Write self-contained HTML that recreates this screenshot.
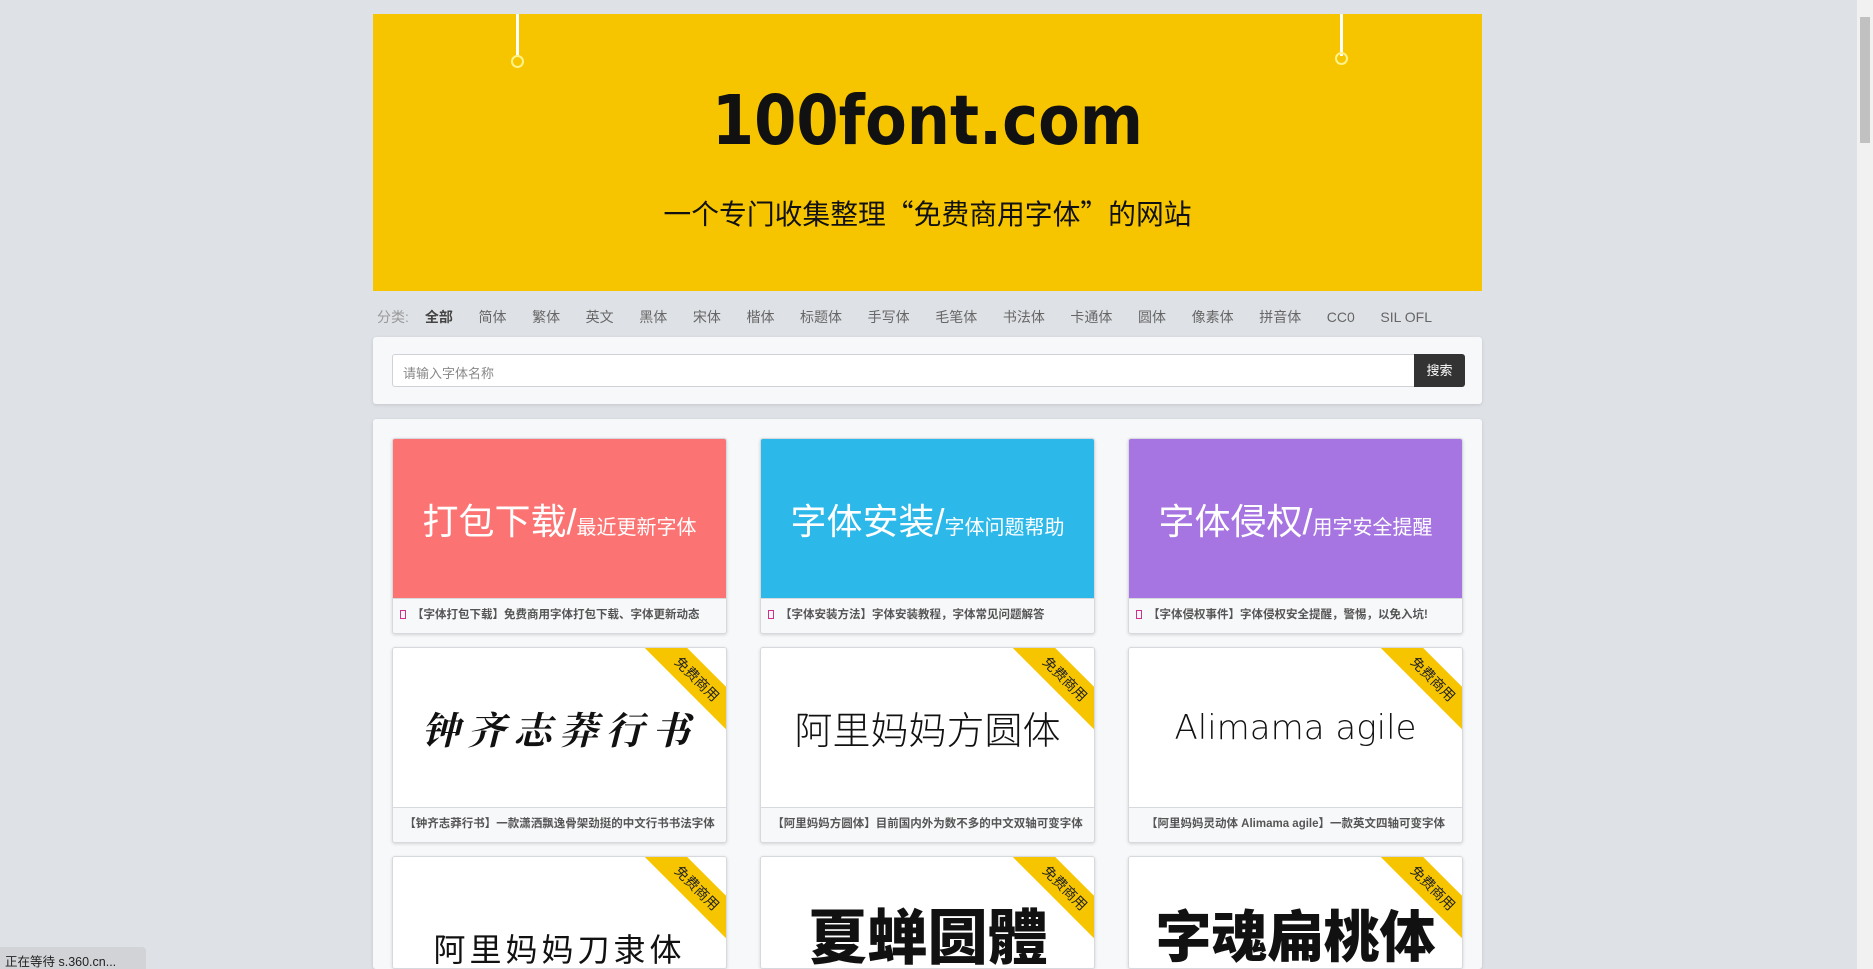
<!DOCTYPE html>
<html><head><meta charset="utf-8"><style>
*{margin:0;padding:0;box-sizing:border-box}
html,body{width:1873px;height:969px;overflow:hidden;background:#dee1e6;font-family:"Liberation Sans","Noto Sans CJK SC",sans-serif}
#wrap{position:relative;width:1873px;height:969px;overflow:hidden}
.banner{position:absolute;left:373px;top:14px;width:1109px;height:277px;background:#f6c500}
.line{position:absolute;top:0;width:3px;height:42px;background:#fff}
.ring{position:absolute;top:41px;width:13px;height:13px;border:2px solid #fff38a;border-radius:50%}
.title{position:absolute;left:0;right:0;top:67px;text-align:center;font-size:69px;line-height:80px;font-weight:bold;color:#111;font-family:"DejaVu Sans","Liberation Sans",sans-serif;transform:scaleX(0.88)}
.sub{position:absolute;left:0;right:0;top:179px;text-align:center;font-size:27.8px;line-height:40px;color:#111;font-family:"Noto Sans CJK SC",sans-serif}
.cats{position:absolute;left:377px;top:307px;font-size:14px;color:#666;white-space:nowrap}
.cats span{margin-right:25.6px}
.cats .lab{color:#999;margin-right:16px}
.cats b{color:#444;margin-right:25.6px}
.panel{position:absolute;left:373px;width:1109px;background:#f7f8fa;border-radius:3px;box-shadow:0 1px 3px rgba(0,0,0,.12)}
.inp{position:absolute;left:19px;top:17px;width:1024px;height:33px;background:#fff;border:1px solid #cfd3d8;border-radius:3px 0 0 3px;font-size:13px;color:#888;padding:8px 10px}
.btn{position:absolute;left:1041px;top:17px;width:51px;height:33px;background:#333;color:#fff;font-size:13px;text-align:center;line-height:33px;border-radius:0 3px 3px 0}
.card{position:absolute;width:335px;background:#f7f8fa;border:1px solid #d6d9de;border-radius:3px;box-shadow:0 1px 3px rgba(0,0,0,.15);overflow:hidden}
.img{height:160px;position:relative;overflow:hidden;background:#fff;border-bottom:1px solid #d6d9de;display:flex;align-items:center;justify-content:center}
.cap{height:34px;font-size:11.5px;font-weight:bold;color:#555;padding:0 5px;line-height:32px;white-space:nowrap;overflow:hidden}
.ic{display:inline-block;width:6px;height:9px;border:1px solid #d0308f;margin:0 6px 0 2px;vertical-align:-1px}
.big{color:#fff;font-size:36px;font-family:"Liberation Sans","Noto Sans CJK SC",sans-serif}
.big small{font-size:20px}
.rib{position:absolute;left:234px;top:16px;width:140px;height:30px;background:#f6c500;transform:rotate(45deg);text-align:center;line-height:30px;font-size:14px;color:#222}
.ft{font-size:38px;color:#111;white-space:nowrap}
.scroll{position:absolute;left:1857px;top:0;width:16px;height:969px;background:#f1f1f1}
.thumb{position:absolute;left:1860px;top:17px;width:10px;height:126px;background:#c1c1c1}
.status{position:absolute;left:0;top:947px;width:146px;height:22px;background:#d1d3d6;border-top-right-radius:4px;font-size:12.5px;color:#222;padding:4px 5px;white-space:nowrap}
</style></head><body><div id="wrap">
<div class="banner">
<div class="line" style="left:143px"></div><div class="ring" style="left:138px"></div>
<div class="line" style="left:967px"></div><div class="ring" style="left:962px;top:38px"></div>
<div class="title">100font.com</div>
<div class="sub">一个专门收集整理“免费商用字体”的网站</div>
</div>
<div class="cats"><span class="lab">分类:</span><b>全部</b><span>简体</span><span>繁体</span><span>英文</span><span>黑体</span><span>宋体</span><span>楷体</span><span>标题体</span><span>手写体</span><span>毛笔体</span><span>书法体</span><span>卡通体</span><span>圆体</span><span>像素体</span><span>拼音体</span><span>CC0</span><span>SIL OFL</span></div>
<div class="panel" style="top:337px;height:67px"><div class="inp">请输入字体名称</div><div class="btn">搜索</div></div>
<div class="panel" style="top:419px;height:550px"></div>

<div class="card" style="left:392px;top:438px"><div class="img" style="background:#fc7373"><div class="big">打包下载/<small>最近更新字体</small></div></div><div class="cap"><span class="ic"></span>【字体打包下载】免费商用字体打包下载、字体更新动态</div></div>
<div class="card" style="left:760px;top:438px"><div class="img" style="background:#2db8ea"><div class="big">字体安装/<small>字体问题帮助</small></div></div><div class="cap"><span class="ic"></span>【字体安装方法】字体安装教程，字体常见问题解答</div></div>
<div class="card" style="left:1128px;top:438px"><div class="img" style="background:#a675e1"><div class="big">字体侵权/<small>用字安全提醒</small></div></div><div class="cap"><span class="ic"></span>【字体侵权事件】字体侵权安全提醒，警惕，以免入坑!</div></div>

<div class="card" style="left:392px;top:647px"><div class="img"><div class="ft" style="font-family:'Noto Serif CJK SC',serif;font-weight:bold;letter-spacing:8px;font-style:italic">钟齐志莽行书</div><div class="rib">免费商用</div></div><div class="cap" style="text-align:center">【钟齐志莽行书】一款潇洒飘逸骨架劲挺的中文行书书法字体</div></div>
<div class="card" style="left:760px;top:647px"><div class="img"><div class="ft" style="font-weight:300">阿里妈妈方圆体</div><div class="rib">免费商用</div></div><div class="cap" style="text-align:center">【阿里妈妈方圆体】目前国内外为数不多的中文双轴可变字体</div></div>
<div class="card" style="left:1128px;top:647px"><div class="img"><div class="ft" style="font-size:34px;font-family:'DejaVu Sans',sans-serif;font-weight:300">Alimama agile</div><div class="rib">免费商用</div></div><div class="cap" style="text-align:center">【阿里妈妈灵动体 Alimama agile】一款英文四轴可变字体</div></div>

<div class="card" style="left:392px;top:856px;height:113px"><div class="img"><div class="ft" style="font-size:32px;letter-spacing:4px;margin-top:22px">阿里妈妈刀隶体</div><div class="rib">免费商用</div></div></div>
<div class="card" style="left:760px;top:856px;height:113px"><div class="img"><div class="ft" style="font-size:60px;font-weight:900;margin-top:-6px;font-family:'Noto Sans CJK TC',sans-serif">夏蝉圆體</div><div class="rib">免费商用</div></div></div>
<div class="card" style="left:1128px;top:856px;height:113px"><div class="img"><div class="ft" style="font-size:56px;font-weight:900;margin-top:-6px">字魂扁桃体</div><div class="rib">免费商用</div></div></div>

<div class="scroll"></div><div class="thumb"></div>
<div class="status">正在等待 s.360.cn...</div>
</div></body></html>
